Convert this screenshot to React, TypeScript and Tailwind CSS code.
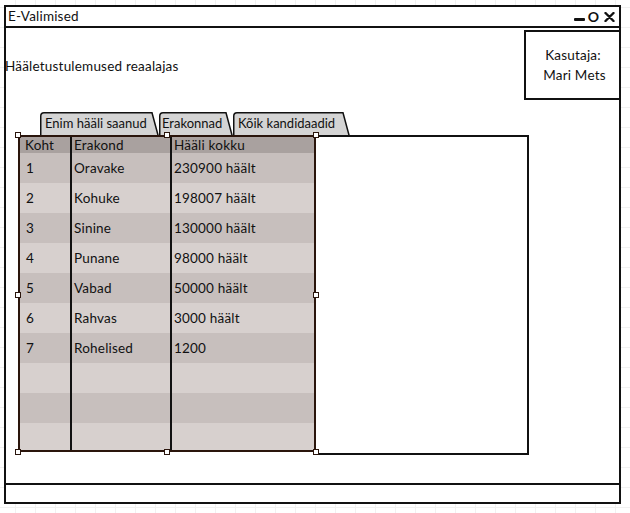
import React from "react";

const rows: [string, string, string][] = [
  ["1", "Oravake", "230900 häält"],
  ["2", "Kohuke", "198007 häält"],
  ["3", "Sinine", "130000 häält"],
  ["4", "Punane", "98000 häält"],
  ["5", "Vabad", "50000 häält"],
  ["6", "Rahvas", "3000 häält"],
  ["7", "Rohelised", "1200"],
  ["", "", ""],
  ["", "", ""],
  ["", "", ""],
];

function Tab({ label, w, pl }: { label: string; w: number; pl: string }) {
  return (
    <div className="relative h-[23px] shrink-0" style={{ width: w }}>
      <svg className="absolute left-0 top-0" width={w} height={24} viewBox={`0 0 ${w} 24`}>
        <path
          d={`M0.75 24 V4 Q0.75 0.75 4 0.75 H${w - 7} L${w - 0.75} 24`}
          fill="#d4d4d4"
          stroke="#111"
          strokeWidth="1.5"
        />
      </svg>
      <span className={`relative block ${pl} pt-[3px] text-[13px] leading-[16px] text-[#111] whitespace-nowrap`}>
        {label}
      </span>
    </div>
  );
}

function Handle({ cls }: { cls: string }) {
  return <div className={`absolute w-[6px] h-[6px] bg-white border border-[#2a150c] ${cls}`} />;
}

export default function App() {
  return (
    <div
      className="w-[630px] h-[513px] pt-[5px] pl-[4px] bg-white bg-[linear-gradient(#f1f1f1_1px,transparent_1px),linear-gradient(90deg,#f1f1f1_1px,transparent_1px)] bg-[length:20px_20px] bg-[position:15px_7px]"
      style={{ fontFamily: "Lato, 'Noto Sans', sans-serif" }}
    >
      <div className="w-[617px] h-[499px] border-2 border-[#111] bg-white flex flex-col">
        {/* title bar */}
        <div className="h-[21px] border-b-2 border-[#111] flex items-center justify-between pl-[2px] pr-[4px] shrink-0">
          <span className="text-[13.5px] tracking-[0.2px] text-[#111] leading-none">E-Valimised</span>
          <div className="flex items-center gap-[3px]">
            <div className="w-[11px] h-[3px] bg-[#111] rounded-[1px] mt-[6px]" />
            <span className="text-[14px] font-bold leading-none text-[#111]">O</span>
            <svg width="11" height="10" viewBox="0 0 11 10" className="ml-[2px]">
              <path d="M1.5 1 L9.5 9 M9.5 1 L1.5 9" stroke="#111" strokeWidth="2.4" strokeLinecap="round" />
            </svg>
          </div>
        </div>

        {/* content */}
        <div className="flex-1 flex flex-col">
          <div className="flex justify-between">
            <div className="pt-[30px] -ml-px text-[13.5px] tracking-[0.2px] leading-[16px] text-[#111]">Hääletustulemused reaalajas</div>
            <div className="mt-[2px] w-[95px] h-[70px] border-2 border-r-0 border-[#111] flex flex-col items-center justify-center gap-[4px] text-[13.5px] tracking-[0.2px] leading-[16px] text-[#111]">
              <span className="pl-[1px]">Kasutaja:</span>
              <span className="pl-[4px]">Mari Mets</span>
            </div>
          </div>

          <div className="flex ml-[34px] mt-[12px]">
            <Tab label="Enim hääli saanud" w={119} pl="pl-[5px]" />
            <Tab label="Erakonnad" w={74} pl="pl-[3px]" />
            <Tab label="Kõik kandidaadid" w={117} pl="pl-[5px]" />
          </div>

          <div className="relative flex ml-[12px] items-start">
            <div className="w-[298px] h-[317px] border-2 border-[#2a150c] overflow-hidden flex flex-col bg-[#d6cfcd] text-[13.5px] tracking-[0.2px] text-[#111]">
              <div className="flex h-[16px] bg-[#a9a19f] shrink-0 leading-[16px]">
                <div className="w-[50px] pl-[5px]">Koht</div>
                <div className="w-[100px] border-l-2 border-[#111] pl-[2px]">Erakond</div>
                <div className="flex-1 border-l-2 border-[#111] pl-[2px]">Hääli kokku</div>
              </div>
              {rows.map((r, i) => (
                <div
                  key={i}
                  className={`flex h-[30px] shrink-0 items-center ${i % 2 === 0 ? "bg-[#c7bfbd]" : "bg-[#d7d0ce]"}`}
                >
                  <div className="w-[50px] h-full flex items-center pl-[6px] pt-px">{r[0]}</div>
                  <div className="w-[100px] h-full border-l-2 border-[#111] flex items-center pl-[2px] pt-px">{r[1]}</div>
                  <div className="flex-1 h-full border-l-2 border-[#111] flex items-center pl-[2px] pt-px">{r[2]}</div>
                </div>
              ))}
            </div>
            <div className="w-[213px] h-[320px] border-2 border-l-0 border-[#111] bg-white" />
            <Handle cls="left-[-3px] top-[-3px]" />
            <Handle cls="left-[146px] top-[-3px]" />
            <Handle cls="left-[295px] top-[-3px]" />
            <Handle cls="left-[-3px] top-[157px]" />
            <Handle cls="left-[295px] top-[157px]" />
            <Handle cls="left-[-3px] top-[314px]" />
            <Handle cls="left-[146px] top-[314px]" />
            <Handle cls="left-[295px] top-[314px]" />
          </div>
        </div>

        {/* status bar */}
        <div className="h-[19px] border-t-2 border-[#111] shrink-0" />
      </div>
    </div>
  );
}
